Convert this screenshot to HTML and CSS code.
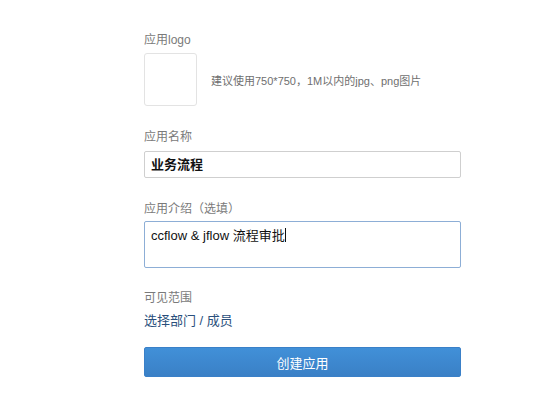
FILE: index.html
```html
<!DOCTYPE html>
<html lang="zh-CN">
<head>
<meta charset="utf-8">
<title>创建应用</title>
<link rel="stylesheet" href="styles.css">
</head>
<body>
<form class="form">
  <div class="label label-first">应用logo</div>
  <div class="logo-row">
    <div class="logo-box"></div>
    <div class="hint">建议使用750*750，1M以内的jpg、png图片</div>
  </div>

  <div class="label label-gap">应用名称</div>
  <div class="input">业务流程</div>

  <div class="label label-gap label-tight">应用介绍（选填）</div>
  <div class="textarea">ccflow &amp; jflow 流程审批<span class="caret"></span></div>

  <div class="label label-gap2">可见范围</div>
  <a class="link">选择部门 / 成员</a>

  <button type="button" class="submit">创建应用</button>
</form>
</body>
</html>
```

FILE: styles.css
```css
* { box-sizing: border-box; }
html, body { margin: 0; padding: 0; background: #fff; }
body {
  font-family: "Liberation Sans", "Noto Sans CJK SC", sans-serif;
  color: #333;
}
.form {
  width: 317px;
  margin-left: 144px;
  padding-top: 32px;
  display: flex;
  flex-direction: column;
}
.label {
  font-size: 12px;
  line-height: 16px;
  height: 16px;
  color: #7a7a7a;
}
.label-gap { margin-top: 23px; }
.label-gap2 { margin-top: 22px; }
.logo-row {
  margin-top: 5px;
  display: flex;
  align-items: center;
  gap: 14px;
}
.logo-box {
  width: 53px;
  height: 53px;
  border: 1px solid #e3e3e3;
  border-radius: 3px;
  background: #fff;
}
.hint {
  font-size: 11px;
  color: #6f6f6f;
}
.input {
  margin-top: 6px;
  height: 27px;
  border: 1px solid #cfcfcf;
  border-radius: 2px;
  padding: 0 6px;
  font-size: 13px;
  line-height: 25px;
  color: #111;
  font-weight: bold;
}
.label-tight + .textarea { margin-top: 4px; }
.textarea {
  height: 47px;
  border: 1px solid #8daed6;
  border-radius: 2px;
  padding: 5px 6px;
  font-size: 13px;
  line-height: 18px;
  color: #111;
}
.caret {
  display: inline-block;
  width: 1px;
  height: 14px;
  background: #111;
  vertical-align: -2px;
}
.link {
  margin-top: 6px;
  font-size: 13px;
  line-height: 18px;
  color: #2a4f7c;
  cursor: pointer;
}
.submit {
  margin-top: 17px;
  height: 30px;
  width: 100%;
  border: 1px solid #3a80c8;
  border-radius: 2px;
  background: linear-gradient(#4190d8, #3a80c6);
  color: #fff;
  font-family: inherit;
  font-size: 13px;
  padding: 0;
}
```
